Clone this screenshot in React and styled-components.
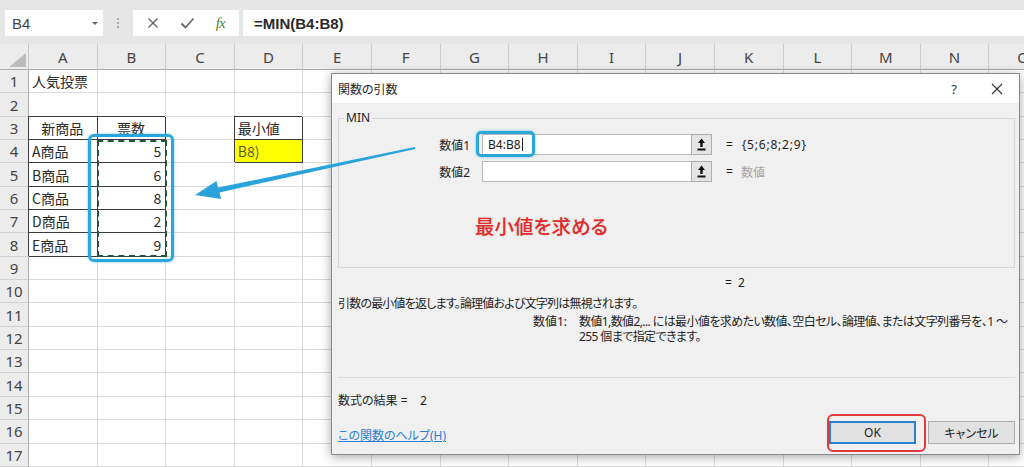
import React from 'react';
import styled, { createGlobalStyle, css } from 'styled-components';

const GlobalStyle = createGlobalStyle`
  html, body {
    margin: 0;
    padding: 0;
    background: #fff;
  }
  body {
    width: 1024px;
    height: 467px;
    overflow: hidden;
    font-family: "Noto Sans CJK JP", "Noto Sans", sans-serif;
  }
`;

const COLS = ['A', 'B', 'C', 'D', 'E', 'F', 'G', 'H', 'I', 'J', 'K', 'L', 'M', 'N', 'O'];

const cells = {
  A1: { text: '人気投票' },
  A3: { text: '新商品', align: 'center', boxed: true },
  B3: { text: '票数', align: 'center', boxed: true },
  D3: { text: '最小値', boxed: true },
  A4: { text: 'A商品', boxed: true },
  B4: { text: '5', align: 'right', boxed: true },
  D4: { text: 'B8)', boxed: true, fill: '#ffff00', muted: true },
  A5: { text: 'B商品', boxed: true },
  B5: { text: '6', align: 'right', boxed: true },
  A6: { text: 'C商品', boxed: true },
  B6: { text: '8', align: 'right', boxed: true },
  A7: { text: 'D商品', boxed: true },
  B7: { text: '2', align: 'right', boxed: true },
  A8: { text: 'E商品', boxed: true },
  B8: { text: '9', align: 'right', boxed: true },
};

const Page = styled.div`
  position: relative;
  width: 1024px;
  height: 467px;
  overflow: hidden;
  display: flex;
  flex-direction: column;
`;

/* ---------- formula bar ---------- */

const Toolbar = styled.div`
  height: 44px;
  box-sizing: border-box;
  padding: 10px 0 8px 5px;
  background: #e6e6e6;
  display: flex;
  align-items: stretch;
`;

const NameBox = styled.div`
  width: 98px;
  background: #fff;
  display: flex;
  align-items: center;
  justify-content: space-between;
  padding: 0 5px 0 7px;
  box-sizing: border-box;
  font-family: "Liberation Sans", sans-serif;
  font-size: 15px;
  color: #444;
`;

const Caret = styled.span`
  width: 0;
  height: 0;
  border-left: 3px solid transparent;
  border-right: 3px solid transparent;
  border-top: 3px solid #666;
`;

const Grip = styled.div`
  width: 30px;
  display: flex;
  flex-direction: column;
  align-items: center;
  justify-content: center;
  gap: 2px;
  span {
    width: 2px;
    height: 2px;
    background: #aaa;
  }
`;

const IconBox = styled.div`
  width: 106px;
  background: #fff;
  display: flex;
  align-items: center;
  justify-content: space-around;
  padding: 0 4px;
  box-sizing: border-box;
`;

const Fx = styled.span`
  font-family: "Liberation Serif", serif;
  font-style: italic;
  font-size: 15px;
  color: #3f8a3f;
  letter-spacing: -1px;
`;

const FormulaInput = styled.div`
  flex: 1;
  margin-left: 4px;
  background: #fff;
  display: flex;
  align-items: center;
  padding-left: 11px;
  font-family: "Liberation Sans", sans-serif;
  font-size: 15px;
  font-weight: 600;
  color: #2a2a2a;
`;

/* ---------- sheet ---------- */

const Sheet = styled.div`
  display: grid;
  grid-template-columns: 29px repeat(15, 68.6px);
  grid-template-rows: 26px repeat(17, 23.35px);
  flex: 1;
`;

const Corner = styled.div`
  background: #ececec;
  border-right: 1px solid #c6c6c6;
  border-bottom: 1px solid #ababab;
  box-sizing: border-box;
  display: flex;
  align-items: flex-end;
  justify-content: flex-end;
  padding: 0 2px 2px 0;
`;

const CornerMark = styled.span`
  width: 0;
  height: 0;
  border-left: 17px solid transparent;
  border-bottom: 14px solid #bcbcbc;
`;

const ColHead = styled.div`
  background: #ececec;
  border-right: 1px solid #cdcdcd;
  border-bottom: 1px solid #ababab;
  box-sizing: border-box;
  display: flex;
  align-items: center;
  justify-content: center;
  font-family: "Noto Sans", sans-serif;
  font-size: 15px;
  color: #444;
`;

const RowHead = styled.div`
  background: #ececec;
  border-right: 1px solid #ababab;
  border-bottom: 1px solid #d2d2d2;
  box-sizing: border-box;
  display: flex;
  align-items: center;
  justify-content: center;
  font-family: "Noto Sans", sans-serif;
  font-size: 15px;
  color: #444;
`;

const Cell = styled.div`
  border-right: 1px solid #dadada;
  border-bottom: 1px solid #dadada;
  box-sizing: border-box;
  padding: 0 4px 0 3px;
  display: flex;
  align-items: center;
  justify-content: ${(p) => (p.$align === 'center' ? 'center' : p.$align === 'right' ? 'flex-end' : 'flex-start')};
  background: ${(p) => p.$fill || 'transparent'};
  font-size: 14px;
  color: ${(p) => (p.$muted ? '#5a5a2a' : '#2a2a2a')};
  white-space: nowrap;
  overflow: hidden;
  ${(p) =>
    p.$boxed &&
    css`
      border-right-color: #3c3c3c;
      border-bottom-color: #3c3c3c;
      box-shadow: -1px -1px 0 #3c3c3c;
    `}
`;

/* ---------- annotations ---------- */

const RangeGlow = styled.div`
  position: absolute;
  left: 88px;
  top: 134px;
  width: 86px;
  height: 128px;
  box-sizing: border-box;
  border: 3px solid #2aa6dd;
  border-radius: 6px;
  box-shadow: 0 0 3px rgba(42, 166, 221, 0.6);
`;

const MarchingAnts = styled.div`
  position: absolute;
  left: 97px;
  top: 140px;
  width: 70px;
  height: 117px;
  box-sizing: border-box;
  border: 2px dashed #24553a;
`;

const ArrowLayer = styled.svg`
  position: absolute;
  left: 0;
  top: 0;
  pointer-events: none;
  z-index: 3;
`;

/* ---------- dialog ---------- */

const Dialog = styled.div`
  position: absolute;
  left: 331px;
  top: 73px;
  width: 689px;
  height: 382px;
  box-sizing: border-box;
  border: 1px solid #8a8a8a;
  background: #f0f0f0;
  box-shadow: 0 2px 10px rgba(0, 0, 0, 0.35);
  display: flex;
  flex-direction: column;
  font-family: "Noto Sans", "Noto Sans CJK JP", sans-serif;
  font-size: 12px;
  color: #1e1e1e;
  font-feature-settings: "palt";
  z-index: 2;
`;

const TitleBar = styled.div`
  height: 29px;
  background: #fff;
  display: flex;
  align-items: center;
  padding-left: 6px;
`;

const Title = styled.div`
  flex: 1;
`;

const TitleButton = styled.div`
  width: ${(p) => p.$w}px;
  height: 29px;
  display: flex;
  align-items: center;
  justify-content: center;
  font-size: 13px;
  color: #333;
`;

const Body = styled.div`
  flex: 1;
  display: flex;
  flex-direction: column;
  padding: 8px 4px 10px 6px;
`;

const Group = styled.fieldset`
  margin: 0;
  padding: 9px 0 0 0;
  height: 157px;
  box-sizing: border-box;
  border: 1px solid #d6d6d6;
  display: flex;
  flex-direction: column;
  gap: 6px;
`;

const Legend = styled.legend`
  padding: 0 2px;
  margin-left: 5px;
  font-size: 12px;
  line-height: 14px;
`;

const ArgRow = styled.div`
  display: grid;
  grid-template-columns: 143px 209px 21px 1fr;
  height: 21px;
  align-items: center;
`;

const ArgLabel = styled.div`
  text-align: right;
  padding-right: 12px;
`;

const ArgInput = styled.div`
  position: relative;
  height: 21px;
  box-sizing: border-box;
  background: #fff;
  border: 1px solid #b9b9b9;
  border-right: none;
  display: flex;
  align-items: center;
  padding-left: 5px;
`;

const TextCaret = styled.span`
  width: 1px;
  height: 13px;
  background: #222;
  margin-left: 1px;
`;

const InputGlow = styled.div`
  position: absolute;
  left: -7px;
  top: -4px;
  width: 59px;
  height: 26px;
  box-sizing: border-box;
  border: 3px solid #2aa6dd;
  border-radius: 5px;
  box-shadow: 0 0 3px rgba(42, 166, 221, 0.6);
`;

const RefButton = styled.div`
  height: 21px;
  box-sizing: border-box;
  background: #e4e4e4;
  border: 1px solid #adadad;
  display: flex;
  align-items: center;
  justify-content: center;
`;

const ArgValue = styled.div`
  display: flex;
  gap: 8px;
  padding-left: 14px;
  color: ${(p) => (p.$placeholder ? '#a5a5a5' : '#1e1e1e')};
  letter-spacing: ${(p) => (p.$placeholder ? 0 : 0.8)}px;
  span:first-child {
    color: #1e1e1e;
  }
`;

const Hint = styled.div`
  margin: 25px 0 0 136px;
  font-family: "Noto Sans CJK JP", sans-serif;
  font-size: 19.5px;
  line-height: 26px;
  color: #e42a2a;
  font-weight: 500;
  text-shadow: 0 0 2px rgba(0, 0, 0, 0.15);
`;

const Line = styled.div`
  line-height: 16px;
  margin-top: ${(p) => p.$mt || 0}px;
  padding-left: ${(p) => p.$pl || 0}px;
  letter-spacing: ${(p) => p.$ls || 0}px;
  white-space: pre;
`;

const ArgHelp = styled.div`
  display: grid;
  grid-template-columns: 229px 1fr;
  column-gap: 12px;
  margin-top: 2px;
  line-height: 15px;
  white-space: nowrap;
`;

const ArgHelpLabel = styled.div`
  text-align: right;
`;

const ArgHelpText = styled.div`
  letter-spacing: -0.6px;
`;

const Separator = styled.div`
  height: 1px;
  background: #dcdcdc;
  margin-top: 33px;
`;

const Footer = styled.div`
  display: flex;
  align-items: center;
  justify-content: space-between;
  margin-top: 12px;
`;

const HelpLink = styled.a`
  color: #2a7fd0;
  text-decoration: underline;
  margin-top: 5px;
`;

const Buttons = styled.div`
  display: flex;
  gap: 12px;
`;

const Button = styled.div`
  position: relative;
  width: 87px;
  height: 23px;
  box-sizing: border-box;
  background: #e1e1e1;
  border: 1px solid ${(p) => (p.$primary ? '#2b7fcf' : '#adadad')};
  box-shadow: ${(p) => (p.$primary ? 'inset 0 0 0 1px #2b7fcf' : 'none')};
  display: flex;
  align-items: center;
  justify-content: center;
`;

const ButtonMark = styled.div`
  position: absolute;
  left: -3px;
  top: -8px;
  right: -11px;
  bottom: -9px;
  border: 2px solid #e2393f;
  border-radius: 6px;
`;

const CloseIcon = () => (
  <svg width="12" height="12" viewBox="0 0 12 12">
    <path d="M1 1L11 11M11 1L1 11" stroke="#333" strokeWidth="1.1" fill="none" />
  </svg>
);

const CancelIcon = () => (
  <svg width="12" height="12" viewBox="0 0 12 12">
    <path d="M1.5 1.5L10.5 10.5M10.5 1.5L1.5 10.5" stroke="#666" strokeWidth="1.4" fill="none" />
  </svg>
);

const CheckIcon = () => (
  <svg width="15" height="12" viewBox="0 0 15 12">
    <path d="M1.5 6.5L5.5 10.5L13.5 1.5" stroke="#666" strokeWidth="1.8" fill="none" />
  </svg>
);

const RefIcon = () => (
  <svg width="9" height="13" viewBox="0 0 9 13">
    <path d="M4.5 0.5L8 5H5.7V9H3.3V5H1Z" fill="#111" />
    <rect x="0.5" y="10.5" width="8" height="2" fill="#111" />
  </svg>
);

const Arrow = () => (
  <ArrowLayer width="1024" height="467" viewBox="0 0 1024 467">
    <polygon
      points="415.2,149 219.5,192.4 221,199 195,195 216.5,181 218,187.6 414.8,147"
      fill="#2aa3dc"
    />
  </ArrowLayer>
);

const renderSheet = () => {
  const items = [<Corner key="corner"><CornerMark /></Corner>];
  COLS.forEach((c) => items.push(<ColHead key={`h${c}`}>{c}</ColHead>));
  for (let r = 1; r <= 17; r += 1) {
    items.push(<RowHead key={`r${r}`}>{r}</RowHead>);
    COLS.forEach((c) => {
      const d = cells[`${c}${r}`] || {};
      items.push(
        <Cell key={`${c}${r}`} $align={d.align} $boxed={d.boxed} $fill={d.fill} $muted={d.muted}>
          {d.text}
        </Cell>
      );
    });
  }
  return items;
};

export default function App() {
  return (
    <Page>
      <GlobalStyle />
      <Toolbar>
        <NameBox>
          B4
          <Caret />
        </NameBox>
        <Grip>
          <span />
          <span />
          <span />
        </Grip>
        <IconBox>
          <CancelIcon />
          <CheckIcon />
          <Fx>fx</Fx>
        </IconBox>
        <FormulaInput>=MIN(B4:B8)</FormulaInput>
      </Toolbar>

      <Sheet>{renderSheet()}</Sheet>

      <RangeGlow />
      <MarchingAnts />

      <Dialog>
        <TitleBar>
          <Title>関数の引数</Title>
          <TitleButton $w={42}>?</TitleButton>
          <TitleButton $w={44}>
            <CloseIcon />
          </TitleButton>
        </TitleBar>
        <Body>
          <Group>
            <Legend>MIN</Legend>
            <ArgRow>
              <ArgLabel>数値1</ArgLabel>
              <ArgInput>
                B4:B8
                <TextCaret />
                <InputGlow />
              </ArgInput>
              <RefButton>
                <RefIcon />
              </RefButton>
              <ArgValue>
                <span>=</span>
                <span>{'{5;6;8;2;9}'}</span>
              </ArgValue>
            </ArgRow>
            <ArgRow>
              <ArgLabel>数値2</ArgLabel>
              <ArgInput />
              <RefButton>
                <RefIcon />
              </RefButton>
              <ArgValue $placeholder>
                <span>=</span>
                <span>数値</span>
              </ArgValue>
            </ArgRow>
            <Hint>最小値を求める</Hint>
          </Group>

          <Line $mt={7} $pl={387}>
            {'=  2'}
          </Line>
          <Line $mt={5} $ls={-0.8}>
            引数の最小値を返します。論理値および文字列は無視されます。
          </Line>
          <ArgHelp>
            <ArgHelpLabel>数値1:</ArgHelpLabel>
            <ArgHelpText>
              数値1,数値2,... には最小値を求めたい数値、空白セル、論理値、または文字列番号を、1 ～
              <br />
              255 個まで指定できます。
            </ArgHelpText>
          </ArgHelp>
          <Separator />
          <Line $mt={15}>{'数式の結果 =    2'}</Line>
          <Footer>
            <HelpLink>この関数のヘルプ(H)</HelpLink>
            <Buttons>
              <Button $primary>
                OK
                <ButtonMark />
              </Button>
              <Button>キャンセル</Button>
            </Buttons>
          </Footer>
        </Body>
      </Dialog>

      <Arrow />
    </Page>
  );
}
